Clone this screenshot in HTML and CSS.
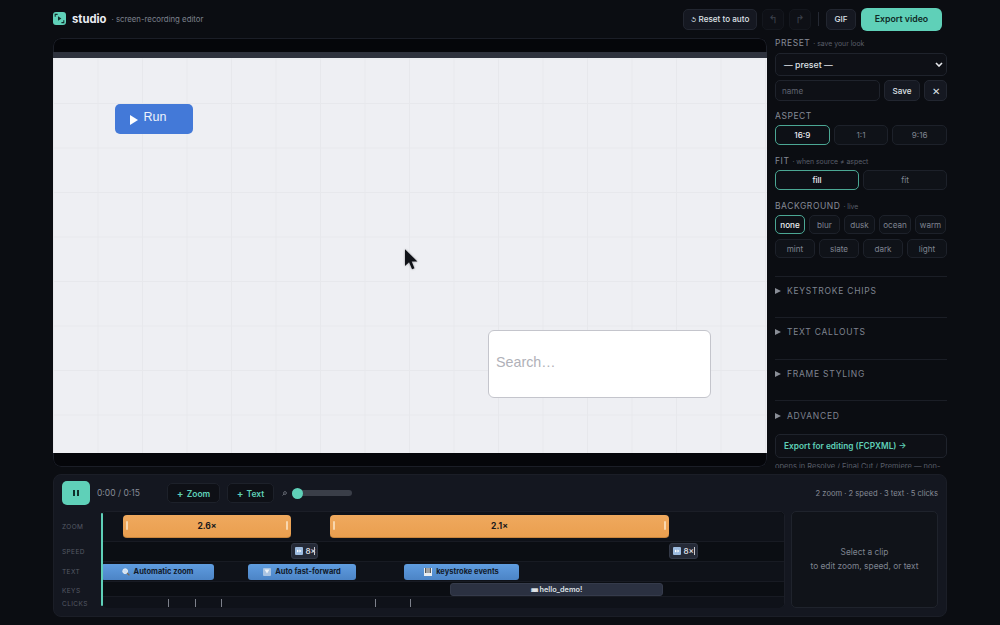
FILE: index.html
```html
<!DOCTYPE html>
<html lang="en">
<head>
<meta charset="utf-8">
<title>studio</title>
<link rel="stylesheet" href="styles.css">
</head>
<body>
<div class="app">
  <header class="topbar">
    <div class="brand">
      <svg class="logo" viewBox="0 0 13 13" width="13" height="13"><rect width="13" height="13" rx="3" fill="#5fd0b8"/><path d="M5 4.2 8.4 6.5 5 8.8Z" fill="#12302c"/><path d="M2.2 4.8V2.4H4.6M10.8 8.2V10.6H8.4" stroke="#12302c" stroke-width="1.1" fill="none"/></svg>
      <span class="brand-name">studio</span>
      <span class="brand-sub">· screen-recording editor</span>
    </div>
    <div class="actions">
      <button class="btn reset"><span class="reset-glyph">↺</span> Reset to auto</button>
      <button class="btn icon-btn dim">↰</button>
      <button class="btn icon-btn dim icon-last">↱</button>
      <span class="vsep"></span>
      <button class="btn gif">GIF</button>
      <button class="export">Export video</button>
    </div>
  </header>

  <main class="workspace">
    <section class="preview">
      <div class="letterbox top-box"></div>
      <div class="chrome-strip"></div>
      <div class="screen">
        <div class="run-btn"><svg viewBox="0 0 8 10" width="8" height="10"><path d="M0 0 8 5 0 10Z" fill="#fff"/></svg><span>Run</span></div>
        <svg class="cursor" viewBox="0 0 14 23" width="13" height="22"><path d="M0 0V18L4.4 14 7.6 21.5 10.2 20.4 7.2 13.2H13.4Z" fill="#111318"/></svg>
        <div class="search-box">Search…</div>
      </div>
      <div class="letterbox bottom-box"></div>
    </section>

    <aside class="sidebar">
      <div class="label">PRESET <small>· save your look</small></div>
      <div class="select"><span>— preset —</span><svg viewBox="0 0 8 5" width="8" height="5"><path d="M1 1 4 4 7 1" fill="none" stroke="#e6e8ec" stroke-width="1.6"/></svg></div>
      <div class="name-row">
        <div class="name-input">name</div>
        <button class="btn save">Save</button>
        <button class="btn close">✕</button>
      </div>
      <div class="label label-gap">ASPECT</div>
      <div class="seg"><button class="opt on">16:9</button><button class="opt">1:1</button><button class="opt">9:16</button></div>
      <div class="label label-wide">FIT <small>· when source ≠ aspect</small></div>
      <div class="seg seg2"><button class="opt on">fill</button><button class="opt">fit</button></div>
      <div class="label label-wide">BACKGROUND <small>· live</small></div>
      <div class="chips chips1"><button class="opt on w30">none</button><button class="opt w31">blur</button><button class="opt w31">dusk</button><button class="opt w32">ocean</button><button class="opt w31">warm</button></div>
      <div class="chips"><button class="opt">mint</button><button class="opt">slate</button><button class="opt">dark</button><button class="opt">light</button></div>
      <div class="fold fold-first"><i></i>KEYSTROKE CHIPS</div>
      <div class="fold"><i></i>TEXT CALLOUTS</div>
      <div class="fold"><i></i>FRAME STYLING</div>
      <div class="fold fold-last"><i></i>ADVANCED</div>
      <button class="fcp">Export for editing (FCPXML) →</button>
      <p class="note">opens in Resolve / Final Cut / Premiere — non-destructive</p>
    </aside>
  </main>

  <section class="timeline">
    <div class="tl-head">
      <button class="pause"><svg viewBox="0 0 8 8" width="8" height="8"><path d="M1 1H3V7H1ZM5 1H7V7H5Z" fill="#10302b"/></svg></button>
      <span class="time">0:00 / 0:15</span>
      <button class="add add-zoom"><span class="plus">+</span> Zoom</button>
      <button class="add add-text"><span class="plus">+</span> Text</button>
      <svg class="mag" viewBox="0 0 6 6" width="5" height="5"><circle cx="3.6" cy="2.4" r="1.7" fill="none" stroke="#868b96" stroke-width=".8"/><path d="M2.4 3.6 .6 5.4" stroke="#868b96" stroke-width=".8"/></svg>
      <div class="slider"><span class="knob"></span></div>
      <span class="stats">2 zoom · 2 speed · 3 text · 5 clicks</span>
    </div>
    <div class="tl-body">
      <div class="labels">
        <div class="r-zoom">ZOOM</div>
        <div class="r-speed">SPEED</div>
        <div class="r-text">TEXT</div>
        <div class="r-keys">KEYS</div>
        <div class="r-clicks">CLICKS</div>
      </div>
      <div class="tracks">
        <div class="track r-zoom alt">
          <div class="clip zoom z1"><b class="h l"></b>2.6×<b class="h r"></b></div>
          <div class="clip zoom z2"><b class="h l"></b>2.1×<b class="h r"></b></div>
        </div>
        <div class="track r-speed">
          <div class="clip speed s1"><svg viewBox="0 0 8 8" width="8" height="8"><rect width="8" height="8" rx="1" fill="#9dbce0"/><path d="M2 2.5 4 4 2 5.5ZM4.4 2.5 6.4 4 4.4 5.5Z" fill="#fff"/></svg><span>8×</span><b class="sh"></b></div>
          <div class="clip speed s2"><svg viewBox="0 0 8 8" width="8" height="8"><rect width="8" height="8" rx="1" fill="#9dbce0"/><path d="M2 2.5 4 4 2 5.5ZM4.4 2.5 6.4 4 4.4 5.5Z" fill="#fff"/></svg><span>8×</span><b class="sh"></b></div>
        </div>
        <div class="track r-text alt">
          <div class="clip text t1"><svg viewBox="0 0 8 8" width="8" height="8"><circle cx="3.2" cy="3.2" r="2.4" fill="#cfe2f5" stroke="#e8edf2"/><path d="M5 5 7.4 7.4" stroke="#7a6a58" stroke-width="1.3"/></svg>Automatic zoom</div>
          <div class="clip text t2"><svg viewBox="0 0 8 8" width="8" height="8"><rect width="8" height="8" rx="1" fill="#a9c3e2"/><path d="M1.5 1.5H6.5L4 5.5Z" fill="#eef3f8"/></svg>Auto fast-forward</div>
          <div class="clip text t3"><svg viewBox="0 0 8 8" width="8" height="8"><rect width="8" height="8" fill="#e9edf1"/><path d="M1.5 0V5M3 0V5M5 0V5M6.5 0V5" stroke="#333" stroke-width=".8"/></svg>keystroke events</div>
        </div>
        <div class="track r-keys">
          <div class="clip keys"><span class="kbd">⌨</span>&nbsp;hello_demo!</div>
        </div>
        <div class="track r-clicks alt">
          <i class="tick" style="left:66px"></i><i class="tick" style="left:93px"></i><i class="tick" style="left:119px"></i><i class="tick" style="left:273px"></i><i class="tick" style="left:308px"></i>
        </div>
        <span class="playhead"></span>
      </div>
      <div class="detail">Select a clip<br>to edit zoom, speed, or text</div>
    </div>
  </section>
</div>
</body>
</html>
```
FILE: styles.css
```css
* { box-sizing: border-box; }
html, body { margin: 0; height: 100%; }
body { background: #0b0d12; color: #e6e8ec; font-family: Inter, "Liberation Sans", sans-serif; overflow: hidden; }
button { font-family: inherit; margin: 0; padding: 0; cursor: pointer; }
.app { width: 1000px; height: 625px; padding: 0 53px; display: flex; flex-direction: column; }

.topbar { height: 38px; flex: none; display: flex; align-items: center; justify-content: space-between; }
.brand { display: flex; align-items: center; }
.logo { margin-top: -1px; }
.brand-name { font-size: 11.25px; font-weight: 700; color: #eceef2; margin-left: 6px; }
.brand-sub { font-size: 7.8px; color: #7c818c; margin-left: 5px; }
.actions { display: flex; align-items: center; }
.btn { background: #151821; border: 1px solid #222630; border-radius: 5px; color: #dfe2e7; font-size: 8.125px; font-weight: 500; }
.reset { width: 74px; height: 21px; margin-right: 5px; }
.reset-glyph { font-size: 6px; }
.icon-btn { width: 22px; height: 21px; margin-right: 5px; display: flex; align-items: center; justify-content: center; font-size: 11px; font-family: "DejaVu Sans", sans-serif; }
.icon-last { margin-right: 7px; }
.dim { background: #0e1016; border-color: #14171e; color: #3b404b; }
.vsep { width: 1px; height: 14px; background: #252933; margin-right: 7px; }
.gif { width: 30px; height: 21px; margin-right: 5px; }
.export { width: 81px; height: 23px; background: #5fd0b8; border: 0; border-radius: 6px; color: #0f2a26; font-size: 8.75px; font-weight: 600; margin-right: 5px; }

.workspace { height: 430px; flex: none; display: flex; gap: 8px; }
.preview { width: 714px; height: 429px; background: #05060a; border-radius: 8px; overflow: hidden; display: flex; flex-direction: column; }
.letterbox { background: #05060a; flex: none; border: 1px solid #1b1e27; }
.top-box { height: 14px; border-bottom: 0; border-radius: 8px 8px 0 0; }
.bottom-box { flex: 1; border-top: 0; border-radius: 0 0 8px 8px; }
.chrome-strip { height: 6px; background: #2e323d; flex: none; }
.screen {
  position: relative; height: 395px; flex: none; overflow: hidden;
  background-color: #eeeff3;
  background-image: linear-gradient(#e7e8ec 1px, transparent 1px), linear-gradient(90deg, #e7e8ec 1px, transparent 1px);
  background-size: 44.5px 44.5px;
  background-position: 44.5px 45px;
}
.run-btn { position: absolute; left: 61.5px; top: 45.5px; width: 78.5px; height: 30px; background: #4379d8; border-radius: 5px; color: #fff; font-size: 12.5px; font-family: "Liberation Sans", sans-serif; display: flex; align-items: center; padding-left: 15px; gap: 6px; }
.run-btn svg { margin-top: 3px; }
.run-btn span { margin-top: -4px; color: #eef3fb; }
.cursor { position: absolute; left: 351.5px; top: 191px; filter: drop-shadow(0 0 1px rgba(0,0,0,.35)); }
.search-box { position: absolute; left: 434.5px; top: 272px; width: 223px; height: 68px; background: #fff; border: 1.5px solid #c4c5cc; border-radius: 6px; color: #b0b1b8; font-size: 14.3px; display: flex; align-items: center; padding: 0 0 5px 7.5px; font-family: "Liberation Sans", sans-serif; }

.sidebar { width: 172px; height: 430px; overflow: hidden; flex: none; }
.label { font-size: 8.5px; color: #868b96; letter-spacing: .55px; line-height: 10px; }
.label small { font-size: 6.875px; color: #595e69; letter-spacing: 0; }
.select { margin-top: 4px; height: 23px; background: #0e1016; border: 1px solid #1f232c; border-radius: 5px; display: flex; align-items: center; justify-content: space-between; padding: 0 3px 0 8px; font-size: 8.75px; font-weight: 500; color: #dfe2e7; }
.name-row { display: flex; gap: 4px; margin-top: 4px; height: 21px; }
.name-input { width: 105px; background: #0e1016; border: 1px solid #1f232c; border-radius: 5px; font-size: 8.125px; color: #5f6470; display: flex; align-items: center; padding-left: 6px; }
.save { width: 36px; }
.close { width: 23px; font-size: 10px; font-weight: 400; }
.label-gap { margin-top: 10px; }
.label-wide { margin-top: 11px; }
.seg { display: flex; gap: 4px; margin-top: 4px; height: 20px; }
.seg2 { margin-top: 3px; }
.opt { flex: 1; min-width: 0; background: #0f1218; border: 1px solid #1d212a; border-radius: 5px; color: #7f8490; font-size: 8.125px; font-weight: 400; }
.opt.on { background: #0d1016; border-color: #4ba794; color: #eceef2; font-weight: 500; }
.chips { display: flex; gap: 4px; margin-top: 5px; height: 19px; }
.chips1 { margin-top: 3px; }
.w30 { flex: 0 0 30px; } .w31 { flex: 0 0 31px; } .w32 { flex: 0 0 32px; }
.fold { height: 41.3px; border-top: 1px solid #1b1e26; font-size: 8.5px; letter-spacing: .75px; color: #7f8490; display: flex; align-items: center; padding-bottom: 12px; }
.fold i { width: 0; height: 0; border-left: 6px solid #8a8e97; border-top: 3.5px solid transparent; border-bottom: 3.5px solid transparent; margin-right: 6px; }
.fold-first { margin-top: 18px; }
.fold-last { height: 34px; padding-bottom: 3px; }
.fcp { display: block; width: 100%; height: 24px; background: #0e1016; border: 1px solid #1f232c; border-radius: 5px; color: #5fd0b8; font-size: 8.3px; font-weight: 600; text-align: left; padding-left: 8px; }
.note { margin: 4px 0 0; font-size: 7.5px; color: #595e69; line-height: 10px; }

.timeline { margin-top: 6px; height: 143px; flex: none; background: #141720; border: 1px solid #1b1e27; border-radius: 8px; padding: 6px 8px 8px 8px; display: flex; flex-direction: column; }
.tl-head { height: 24px; flex: none; display: flex; align-items: center; }
.pause { width: 28px; height: 24px; background: #5fd0b8; border: 0; border-radius: 5px; display: flex; align-items: center; justify-content: center; }
.time { font-size: 8.5px; color: #868b96; margin-left: 7px; width: 70px; }
.add { height: 20px; background: #0e1016; border: 1px solid #1d212a; border-radius: 5px; color: #5fd0b8; font-size: 8.5px; font-weight: 600; }
.plus { font-size: 10px; margin-right: 1px; }
.add-zoom { width: 53px; margin-right: 7px; }
.add-text { width: 47px; }
.mag { margin: 0 5px 0 8px; flex: none; }
.slider { position: relative; width: 60px; height: 6px; background: #3a3e48; border-radius: 3px; }
.knob { position: absolute; left: 0; top: -2.5px; width: 11px; height: 11px; border-radius: 50%; background: #5fd0b8; }
.stats { margin-left: auto; font-size: 7.6px; color: #868b96; }

.tl-body { flex: 1; display: flex; margin-top: 6px; min-height: 0; }
.labels { width: 39px; flex: none; padding-top: 1px; font-size: 6.5px; letter-spacing: .4px; color: #555a65; }
.labels div { display: flex; align-items: center; }
.r-zoom { height: 30px; }
.r-speed { height: 20px; }
.r-text { height: 20px; }
.r-keys { height: 15px; }
.r-clicks { height: 11px; }
.labels .r-keys { padding-top: 2px; }
.labels .r-clicks { padding-top: 2px; }
.tracks { position: relative; width: 684px; height: 97px; background: #0b0e13; border: 1px solid #1b1e27; border-radius: 5px; margin-right: 6px; flex: none; }
.track { position: relative; border-bottom: 1px solid #181b23; }
.track.alt { background: #0f1219; }
.r-clicks.track { border-bottom: 0; border-radius: 0 0 5px 5px; }
.r-zoom.track { border-radius: 5px 5px 0 0; }
.playhead { position: absolute; left: -1px; top: 1px; bottom: 1px; width: 2px; background: #5fd0b8; border-radius: 1px; }
.clip { position: absolute; display: flex; align-items: center; justify-content: center; white-space: nowrap; }
.zoom { top: 3px; height: 23px; background: linear-gradient(#efa95e, #ea9f4f); border-radius: 4px; border-bottom: 1px solid #c9853c; color: #1a1a1c; font-size: 8.5px; font-weight: 700; }
.z1 { left: 21px; width: 168px; }
.z2 { left: 228px; width: 339px; }
.h { position: absolute; top: 6px; width: 2px; height: 9px; background: #f9d7ae; border-radius: 1px; }
.h.l { left: 3px; } .h.r { right: 3px; }
.speed { top: 1px; height: 16px; background: #252a37; border: 1px solid #333947; border-radius: 3px; color: #d5d8de; font-size: 8px; font-weight: 600; gap: 3px; justify-content: flex-start; padding-left: 2.5px; }
.s1 { left: 189px; width: 27px; }
.s2 { left: 567px; width: 29px; }
.sh { position: absolute; right: 2px; top: 3px; width: 1px; height: 8px; background: #c9ccd2; }
.text { top: 2px; height: 15.5px; background: linear-gradient(#5f9de0, #4c84c6); border-radius: 3px; color: #111a2a; font-size: 7.5px; font-weight: 700; gap: 4px; }
.t1 { left: -1px; width: 113px; }
.t2 { left: 146px; width: 108px; }
.t3 { left: 302px; width: 115px; }
.keys { left: 348px; top: 1px; width: 213px; height: 13px; background: #2b3141; border: 1px solid #353b4b; border-radius: 3px; color: #dfe2e7; font-size: 7.3px; font-weight: 600; }
.kbd { font-size: 5px; }
.tick { position: absolute; top: 2px; width: 1px; height: 8px; background: #7d818b; }
.detail { width: 147px; height: 97px; background: #101319; border: 1px solid #1f232c; border-radius: 5px; display: flex; align-items: center; justify-content: center; text-align: center; font-size: 8.35px; line-height: 13.5px; color: #7f8490; flex: none; }
```
